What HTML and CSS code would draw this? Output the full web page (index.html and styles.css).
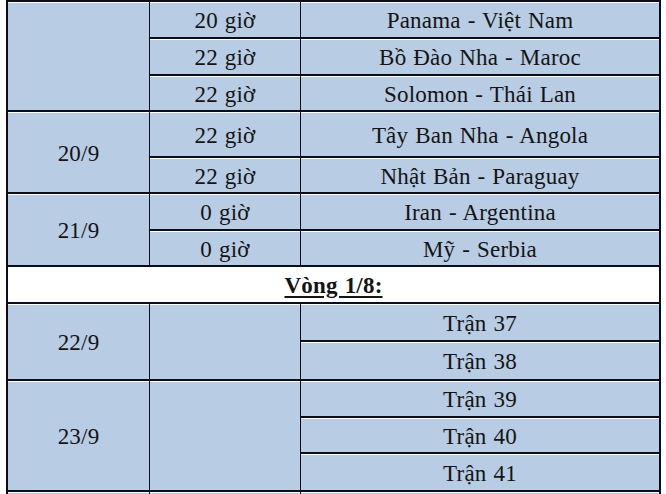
FILE: index.html
```html
<!DOCTYPE html>
<html lang="vi">
<head>
<meta charset="utf-8">
<link rel="stylesheet" href="styles.css">
</head>
<body>
<div class="wrap">
  <div class="sched">
    <div class="c c1 span3"></div>
    <div class="c c2">20 giờ</div>
    <div class="c c3">Panama - Việt Nam</div>
    <div class="c c2">22 giờ</div>
    <div class="c c3">Bồ Đào Nha - Maroc</div>
    <div class="c c2">22 giờ</div>
    <div class="c c3">Solomon - Thái Lan</div>

    <div class="c c1 span2">20/9</div>
    <div class="c c2">22 giờ</div>
    <div class="c c3">Tây Ban Nha - Angola</div>
    <div class="c c2">22 giờ</div>
    <div class="c c3">Nhật Bản - Paraguay</div>

    <div class="c c1 span2">21/9</div>
    <div class="c c2">0 giờ</div>
    <div class="c c3">Iran - Argentina</div>
    <div class="c c2">0 giờ</div>
    <div class="c c3">Mỹ - Serbia</div>

    <div class="c full round"><span>Vòng 1/8:</span></div>

    <div class="c c1 span2">22/9</div>
    <div class="c c2 span2"></div>
    <div class="c c3">Trận 37</div>
    <div class="c c3">Trận 38</div>

    <div class="c c1 span3">23/9</div>
    <div class="c c2 span3"></div>
    <div class="c c3">Trận 39</div>
    <div class="c c3">Trận 40</div>
    <div class="c c3">Trận 41</div>

    <div class="c c1"></div>
    <div class="c c2"></div>
    <div class="c c3"></div>
  </div>
</div>
</body>
</html>
```
FILE: styles.css
```css
html, body {
  margin: 0;
  padding: 0;
  background: #ffffff;
}
body {
  overflow: hidden;
  height: 494px;
}
.wrap {
  padding-left: 6px;
}
.sched {
  display: grid;
  width: 655px;
  grid-template-columns: 143px 151px 361px;
  grid-template-rows: 37px 37px 36px 46px 36px 37px 36px 37px 38px 39px 37px 36px 38px 4px;
  font-family: "Liberation Serif", "Times New Roman", serif;
  font-size: 23px;
  letter-spacing: 0.2px;
  word-spacing: 1px;
  color: #141414;
}
.c {
  box-sizing: border-box;
  background: #b8cce4;
  border-top: 2px solid #0b0d1c;
  border-left: 1px solid #0b0d1c;
  box-shadow: inset 0 1px 0 #ffffff;
  display: flex;
  align-items: center;
  justify-content: center;
  padding-top: 3px;
}
.c1 { grid-column: 1; border-left-width: 2px; }
.c2 { grid-column: 2; }
.c3 { grid-column: 3; border-right: 2px solid #0b0d1c; }
.span2 { grid-row: span 2; }
.span3 { grid-row: span 3; }
.full {
  grid-column: 1 / 4;
  border-left-width: 2px;
  border-right: 2px solid #0b0d1c;
  background: #ffffff;
  box-shadow: none;
}
.round span {
  font-weight: bold;
  text-decoration: underline;
  text-underline-offset: 3px;
}
```
